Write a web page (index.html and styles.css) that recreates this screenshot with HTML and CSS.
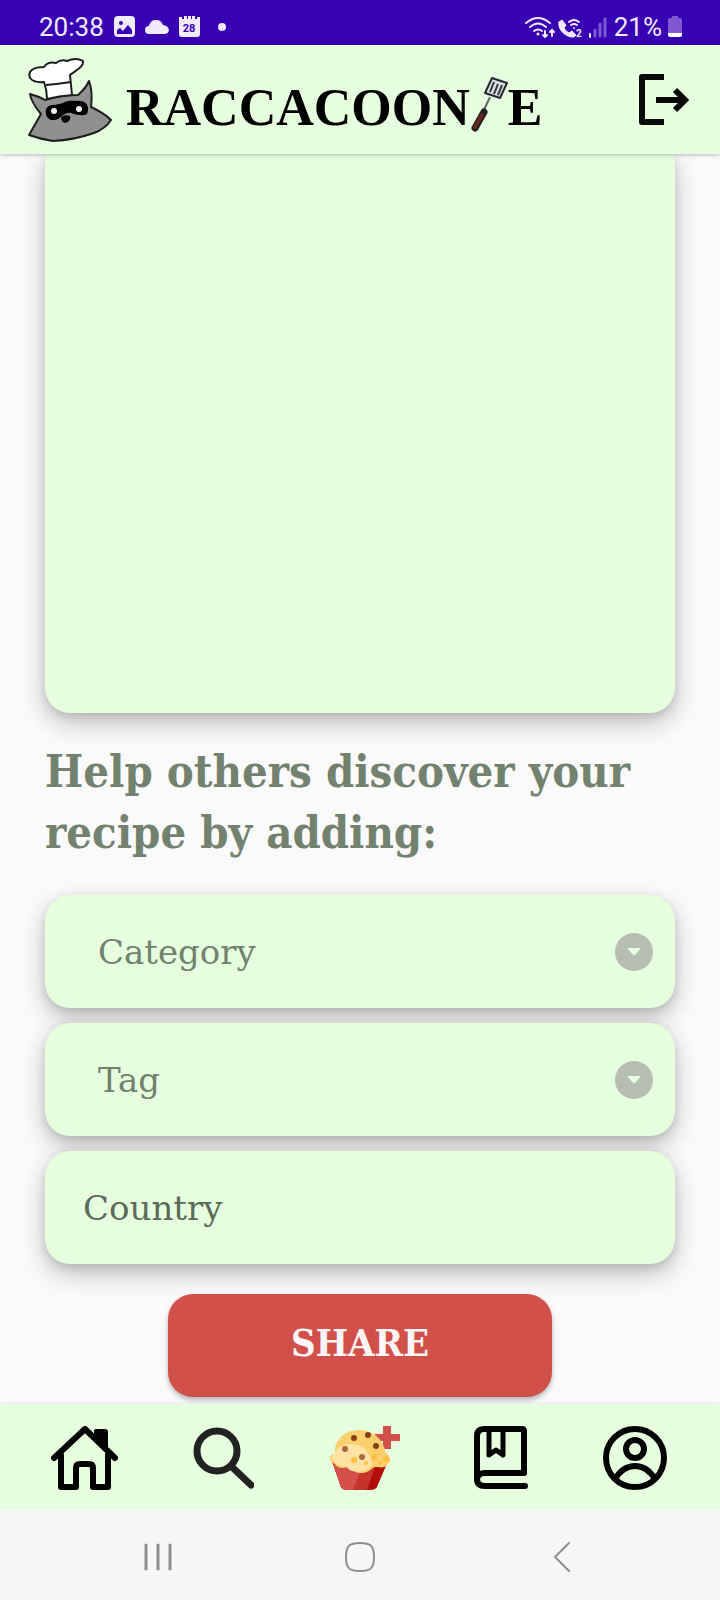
FILE: index.html
```html
<!DOCTYPE html>
<html lang="en">
<head>
<meta charset="utf-8">
<meta name="viewport" content="width=device-width, initial-scale=1">
<title>Raccacoonie</title>
<link rel="stylesheet" href="styles.css">
</head>
<body>
<div class="app">
  <div class="status">
    <div class="status-group">
      <span class="status-time">20:38</span>
      <svg width="21" height="21" viewBox="0 0 21 21" aria-hidden="true"><path fill="#f2eaff" fill-rule="evenodd" d="M4 0h13a4 4 0 0 1 4 4v13a4 4 0 0 1-4 4H4a4 4 0 0 1-4-4V4a4 4 0 0 1 4-4zM3 14v4h15v-4l-4-5-5 6-3-3zM7 5a2 2 0 1 0 0 4 2 2 0 0 0 0-4z"/></svg>
      <svg width="24" height="14" viewBox="0 0 24 14" aria-hidden="true"><path fill="#f2eaff" d="M4 14a4 4 0 0 1 0-8C5 1 8 0 11 0c4 0 6 2 7 5 8 1 7 9 2 9z"/></svg>
      <svg width="21" height="21" viewBox="0 0 21 21" aria-hidden="true"><path fill="#f2eaff" d="M0 1h3v2h2V0h3v3h1V0h3v3h1V0h3v3h2V1h3v17a3 3 0 0 1-3 3H3a3 3 0 0 1-3-3z"/><text x="10" y="16" text-anchor="middle" class="calendar-day">28</text></svg>
      <span class="dot"></span>
    </div>
    <div class="status-group status-right">
      <svg width="84" height="22" viewBox="522 14 84 22" fill="none" stroke="#f2eaff" stroke-width="2" stroke-linecap="round" aria-hidden="true">
        <path d="M524 21q12-10 24 0M528 25q8-7 16 0M532 29q4-3 8 0"/><circle cx="536" cy="32" r="1.500" fill="#f2eaff" stroke="none"/>
        <path d="M543 29v6m-2-2 2 2 2-2M550 34v-6m-2 2 2-2 2 2"/>
        <path fill="#f2eaff" stroke-width="1" d="M557 20l3-2 4 5-2 3q2 4 5 5l3-2 4 4-2 2c-7 1-17-7-15-15z"/>
        <path d="M567 20q5-4 10 0M569 23q3-2 6 0"/><circle cx="572" cy="26" r="1" fill="#f2eaff" stroke="none"/>
        <text x="574" y="35" class="sim">2</text>
        <path d="M588 32v3"/><path stroke="#795bd0" stroke-width="3" d="M593 28v6M598 22v12M603 17v17"/>
      </svg>
      <span class="status-battery">21%</span>
      <svg width="14" height="21" viewBox="0 0 14 21" aria-hidden="true"><path fill="#8058d2" d="M4 0h6v2h2a2 2 0 0 1 2 2v13H0V4a2 2 0 0 1 2-2h2z"/><path fill="#fff" d="M0 17h14v2a2 2 0 0 1-2 2H2a2 2 0 0 1-2-2z"/></svg>
    </div>
  </div>

  <header class="header">
    <div class="brand">
      <svg class="raccoon" width="86" height="86" viewBox="27 56 86 86" aria-hidden="true">
        <g stroke="#1d1d1d" stroke-width="2" stroke-linejoin="round">
          <path fill="#909090" d="M29 134 41 113Q31 101 30 93q8 2 15 6 15-5 33-5 8-7 11-14 4 10 2 26 13 6 20 13-6 9-17 13-20 7-41 8-13-2-24-6z"/>
          <path fill="#fff" d="M47 98q0-9-3-17-10 1-14-4c-3-8 5-11 14-11q4-6 12-4 5-4 11-2 9-4 16 0c1 6-7 9-13 14l2 20q-13 1-25 4z"/>
          <path fill="none" d="M46 84q12-1 25-3"/>
        </g>
        <path fill="#000" d="M46 108c3-6 10-3 17-6 5-3 11-2 18-2 8 1 8 9 6 13-5 3-12 0-16-1-5-1-9 3-13 6-6 3-14 0-12-10z"/>
        <circle cx="54" cy="110" r="3" fill="#eee"/><circle cx="79" cy="108" r="3" fill="#eee"/>
        <path fill="#000" d="M61 116q4-3 9-1c1 3-1 6-5 7q-4-1-4-6z"/>
      </svg>
      <span class="wordmark">RACCACOON</span>
      <svg class="spatula" width="38" height="56" viewBox="473 76 38 56" aria-hidden="true">
        <path stroke="#666" stroke-width="2" d="M493 97l-6 13"/>
        <path fill="#d8dbe0" stroke="#24272b" stroke-width="2" stroke-linejoin="round" d="M495 78l15 5-7 15-15-5z"/>
        <path fill="none" stroke="#33373c" stroke-width="2" d="M497 82l-4 10M501 84l-4 10M505 85l-4 10"/>
        <path fill="none" stroke="#202020" stroke-width="7" stroke-linecap="round" d="M487 112l-9 16"/>
        <path fill="none" stroke="#63291f" stroke-width="4" stroke-linecap="round" d="M485 115l-7 12"/>
      </svg>
      <span class="wordmark">E</span>
    </div>
    <button class="icon-button" aria-label="Log out">
      <svg width="52" height="52" viewBox="0 0 52 52" fill="none" stroke="#0a0a0a" stroke-width="6" aria-hidden="true"><path stroke-linejoin="round" d="M26 3H4v45h22"/><path d="M18 26h30M37 16l10 10-10 10"/></svg>
    </button>
  </header>

  <main class="main">
    <div class="card"></div>
    <h1 class="title">Help others discover your recipe by adding:</h1>
    <form class="form">
      <div class="field">
        <select class="control control-select" aria-label="Category"><option>Category</option></select>
        <svg class="chevron" width="38" height="38" viewBox="0 0 38 38" aria-hidden="true"><circle cx="19" cy="19" r="19" fill="#b5beb1"/><path fill="#e5ffdf" d="M12 15h14l-7 8z"/></svg>
      </div>
      <div class="field">
        <select class="control control-select" aria-label="Tag"><option>Tag</option></select>
        <svg class="chevron" width="38" height="38" viewBox="0 0 38 38" aria-hidden="true"><circle cx="19" cy="19" r="19" fill="#b5beb1"/><path fill="#e5ffdf" d="M12 15h14l-7 8z"/></svg>
      </div>
      <div class="field">
        <input class="control" type="text" placeholder="Country" aria-label="Country">
      </div>
      <button class="share" type="button">SHARE</button>
    </form>
  </main>

  <nav class="nav">
    <button class="icon-button" aria-label="Home">
      <svg width="67" height="65" viewBox="51 1426 67 65" fill="none" stroke="#000" stroke-width="6" stroke-linecap="round" stroke-linejoin="round" aria-hidden="true"><path d="M54 1458l31-29 30 29M61 1455v32h15v-19q0-4 4-4h9q4 0 4 4v19h15v-32"/><path fill="#000" stroke-width="2" d="M95 1436v-5q0-1 1-1h9q2 0 2 2v18z"/></svg>
    </button>
    <button class="icon-button" aria-label="Search">
      <svg width="62" height="63" viewBox="193 1427 62 63" fill="none" stroke="#222" stroke-width="7" stroke-linecap="round" aria-hidden="true"><circle cx="218" cy="1451" r="20"/><path d="M234 1468l18 17"/></svg>
    </button>
    <button class="icon-button" aria-label="Add recipe">
      <svg width="71" height="65" viewBox="330 1426 71 65" aria-hidden="true">
        <path fill="#d1504a" d="M384 1426h8v8h9v7h-9v8h-8v-8h-8v-7h8z"/>
        <path fill="#b20d08" d="M333 1461h56l-11 26q-2 3-6 3h-24q-4 0-6-3z"/>
        <path fill="#c6332c" d="M333 1461h45l-10 29h-20q-4 0-6-3z"/>
        <path fill="#d5504b" d="M333 1461l28 11-7 18h-6q-4 0-6-3z"/>
        <path fill="#fdd06e" d="M336 1453c-1-13 10-23 24-23s25 10 26 22c5 3 7 9 3 12-3 5-10 3-13 3-4 1-5 6-14 6-8 0-9-5-13-6-6 2-11 1-13-3-7-3-7-8 0-11z"/>
        <path fill="#fee3a5" d="M339 1448q14-8 26 0 9 10 8 18c-4 5-21 9-25 1-7 0-13-4-15-9q2-5 6-10z"/>
        <g fill="#ffc13f"><circle cx="375" cy="1457" r="3"/><circle cx="387" cy="1459" r="3"/><circle cx="355" cy="1460" r="3"/><circle cx="367" cy="1463" r="2"/><circle cx="381" cy="1463" r="2"/></g>
        <g fill="#873f1b"><circle cx="355" cy="1438" r="3"/><circle cx="369" cy="1435" r="3"/><circle cx="377" cy="1446" r="3"/></g>
        <g fill="#ae6641"><circle cx="346" cy="1449" r="3"/><circle cx="363" cy="1457" r="3"/></g>
      </svg>
    </button>
    <button class="icon-button" aria-label="Recipe book">
      <svg width="54" height="64" viewBox="474 1426 54 64" fill="none" stroke="#000" stroke-width="6" stroke-linecap="round" stroke-linejoin="round" aria-hidden="true"><path d="M525 1486h-40q-8 0-8-7v-43q0-7 7-7h38q2 0 2 2v42h-39q-8 0-8 7"/><path stroke-width="5" d="M489 1430v25l7-5 7 5v-25"/></svg>
    </button>
    <button class="icon-button" aria-label="Profile">
      <svg width="66" height="66" viewBox="0 0 66 66" fill="none" stroke="#000" stroke-width="6" aria-hidden="true"><circle cx="33" cy="33" r="29"/><circle cx="33" cy="24" r="9"/><path d="M13 54q8-13 20-13t20 13"/></svg>
    </button>
  </nav>

  <div class="system">
    <button class="icon-button" aria-label="Recent apps"><svg width="28" height="30" viewBox="0 0 28 30" stroke="#8e8e8e" stroke-width="3" stroke-linecap="round" aria-hidden="true"><path d="M2 3v24M14 3v24M26 3v24"/></svg></button>
    <button class="icon-button" aria-label="Home screen"><svg width="30" height="30" viewBox="0 0 30 30" fill="none" stroke="#8e8e8e" stroke-width="2" aria-hidden="true"><path d="M15 1c11 0 14 3 14 14s-3 14-14 14S1 26 1 15 4 1 15 1z"/></svg></button>
    <button class="icon-button" aria-label="Back"><svg width="18" height="30" viewBox="0 0 18 30" fill="none" stroke="#8e8e8e" stroke-width="2" stroke-linecap="round" aria-hidden="true"><path d="M16 1L2 15l14 14"/></svg></button>
  </div>
</div>
</body>
</html>
```
FILE: styles.css
```css
* {
  box-sizing: border-box;
}

body {
  margin: 0;
  background: #fafafa;
  font-family: "DejaVu Serif", serif;
}

svg {
  display: block;
  flex: none;
}

.app {
  display: flex;
  flex-direction: column;
  min-height: 100vh;
}

.status {
  display: flex;
  justify-content: space-between;
  align-items: center;
  padding: 8px 38px 0 39px;
  height: 45px;
  background: #3700b3;
  color: #f2eaff;
  font: 26px/36px Roboto, sans-serif;
}

.status-group {
  display: flex;
  align-items: center;
  gap: 10px;
}

.status-right {
  gap: 6px;
}

.dot {
  width: 8px;
  height: 8px;
  margin-left: 8px;
  border-radius: 50%;
  background: #f2eaff;
}

.calendar-day {
  font: bold 11px Roboto, sans-serif;
  fill: #3700b3;
}

.sim {
  font: bold 10px Roboto, sans-serif;
  fill: #f2eaff;
  stroke: none;
}

.header {
  position: relative;
  z-index: 1;
  display: flex;
  justify-content: space-between;
  align-items: center;
  padding: 12px 30px 11px 27px;
  background: #e5ffdf;
  box-shadow: 0 1px 4px rgba(0, 0, 0, 0.25);
}

.brand {
  display: flex;
  align-items: center;
}

.raccoon {
  margin-right: 13px;
}

.spatula {
  margin-top: 8px;
}

.wordmark {
  padding-top: 16px;
  color: #000;
  font: bold 52px/60px "Liberation Serif", serif;
}

.icon-button {
  display: block;
  padding: 0;
  border: 0;
  background: none;
}

.main {
  flex: 1;
  display: flex;
  flex-direction: column;
  padding: 0 45px 7px;
}

.card,
.field {
  background: #e5ffdf;
  box-shadow: 0 10px 24px rgba(0, 0, 0, 0.24), 0 3px 10px rgba(0, 0, 0, 0.1);
}

.card {
  flex: 1;
  border-radius: 0 0 25px 25px;
}

.title {
  margin: 28px 0 32px;
  color: #72826e;
  font: bold 45px/61px "DejaVu Serif Condensed", "DejaVu Serif", serif;
}

.form {
  display: flex;
  flex-direction: column;
  gap: 15px;
}

.field {
  position: relative;
  border-radius: 25px;
}

.control {
  display: block;
  width: 100%;
  height: 113px;
  padding: 0 38px;
  border: 0;
  border-radius: 25px;
  outline: 0;
  background: none;
  color: #72826e;
  font: 34px/44px "DejaVu Serif", serif;
}

.control-select {
  appearance: none;
  padding: 0 70px 0 53px;
}

.control::placeholder {
  color: #5b6b57;
  opacity: 1;
}

.chevron {
  position: absolute;
  right: 22px;
  top: 50%;
  transform: translateY(-50%);
  pointer-events: none;
}

.share {
  align-self: center;
  width: 61%;
  height: 103px;
  margin-top: 15px;
  padding-bottom: 6px;
  border: 0;
  border-radius: 25px;
  background: #d1504a;
  box-shadow: 0 3px 5px rgba(0, 0, 0, 0.28);
  color: #fff6f8;
  font: bold 38px/48px "DejaVu Serif Condensed", "DejaVu Serif", serif;
}

.nav {
  position: relative;
  display: flex;
  justify-content: space-between;
  align-items: center;
  height: 106px;
  padding: 2px 52px 0 51px;
  background: #e5ffdf;
  box-shadow: 0 0 4px rgba(0, 0, 0, 0.12);
}

.system {
  position: relative;
  display: grid;
  grid-template-columns: repeat(3, 1fr);
  place-items: center;
  height: 90px;
  padding: 3px 57px 0;
  background: #f6f6f6;
}
```
